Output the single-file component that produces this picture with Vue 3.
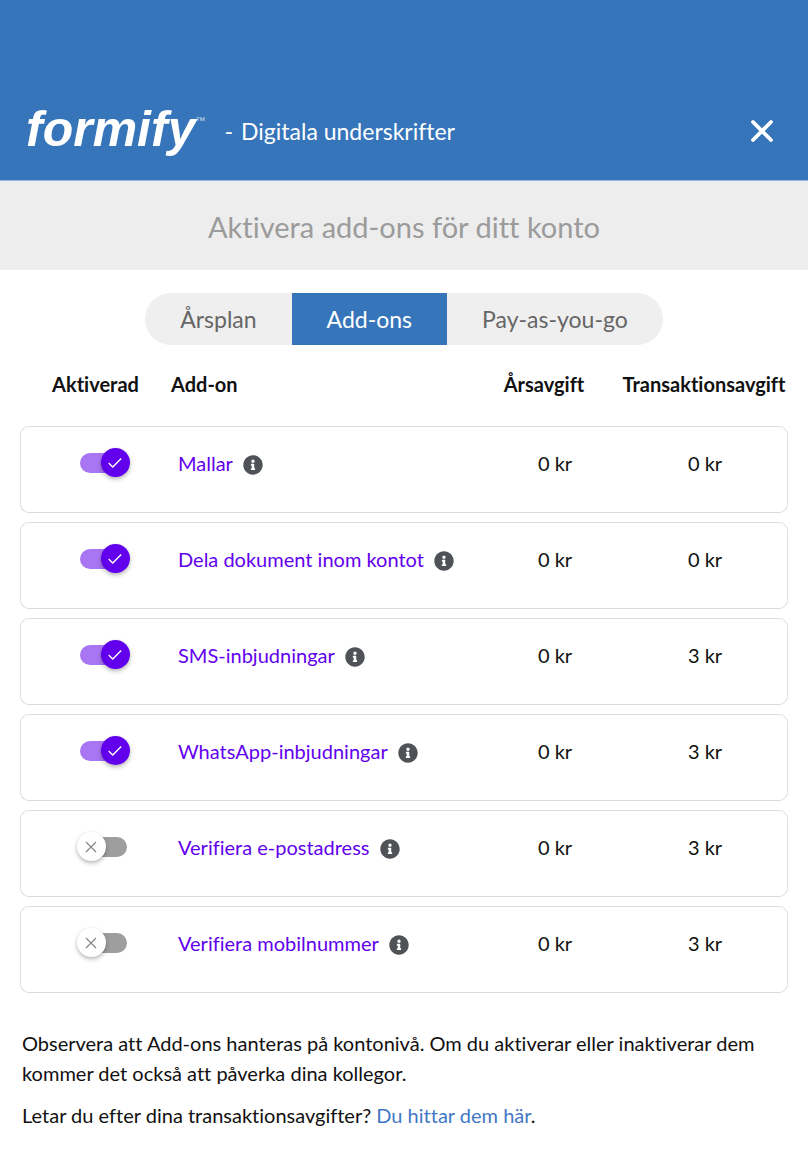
<script setup>
import { ref } from 'vue';

const tabs = ['Årsplan', 'Add-ons', 'Pay-as-you-go'];
const activeTab = ref('Add-ons');

const addons = ref([
  { id: 'mallar', name: 'Mallar', yearly: 0, transaction: 0, active: true },
  { id: 'dela', name: 'Dela dokument inom kontot', yearly: 0, transaction: 0, active: true },
  { id: 'sms', name: 'SMS-inbjudningar', yearly: 0, transaction: 3, active: true },
  { id: 'whatsapp', name: 'WhatsApp-inbjudningar', yearly: 0, transaction: 3, active: true },
  { id: 'epost', name: 'Verifiera e-postadress', yearly: 0, transaction: 3, active: false },
  { id: 'mobil', name: 'Verifiera mobilnummer', yearly: 0, transaction: 3, active: false },
]);
</script>

<template>
  <div class="page">
    <header class="topbar">
      <div class="logo">formify<span class="tm">™</span></div>
      <span class="dash">-</span>
      <span class="tagline">Digitala underskrifter</span>
      <button class="close-btn" type="button" aria-label="Stäng">
        <svg viewBox="0 0 24 24" width="24" height="24">
          <path d="M3 3 L21 21 M21 3 L3 21" />
        </svg>
      </button>
    </header>

    <h1 class="title">Aktivera add-ons för ditt konto</h1>

    <main class="content">
      <div class="tabs">
        <button
          v-for="tab in tabs"
          :key="tab"
          type="button"
          class="tab"
          :class="{ active: tab === activeTab }"
          @click="activeTab = tab"
        >{{ tab }}</button>
      </div>

      <table class="addons">
        <thead>
          <tr>
            <th class="col-active">Aktiverad</th>
            <th class="col-name">Add-on</th>
            <th class="col-year">Årsavgift</th>
            <th class="col-trans">Transaktionsavgift</th>
          </tr>
        </thead>
        <tbody>
          <tr v-for="addon in addons" :key="addon.id">
            <td class="col-active">
              <span class="switch">
                <input :id="addon.id" v-model="addon.active" type="checkbox" role="switch">
                <span class="track"></span>
                <span class="thumb">
                  <svg v-if="addon.active" viewBox="0 0 24 24" width="18" height="18">
                    <path d="M19.69 5.23 L8.96 15.96 L4.23 11.23 L2.96 12.5 L8.96 18.5 L20.96 6.5 Z" />
                  </svg>
                  <svg v-else class="cross" viewBox="0 0 12 12" width="12" height="12">
                    <path d="M1 1 L11 11 M11 1 L1 11" />
                  </svg>
                </span>
              </span>
            </td>
            <td class="col-name">
              <label :for="addon.id">{{ addon.name }}</label>
              <svg class="info" viewBox="0 0 512 512" width="20" height="20">
                <path d="M256 8C119 8 8 119 8 256s111 248 248 248 248-111 248-248S393 8 256 8zm0 110c23 0 42 19 42 42s-19 42-42 42-42-19-42-42 19-42 42-42zm56 254c0 7-5 12-12 12h-88c-7 0-12-5-12-12v-24c0-7 5-12 12-12h12v-64h-12c-7 0-12-5-12-12v-24c0-7 5-12 12-12h64c7 0 12 5 12 12v100h12c7 0 12 5 12 12z" />
              </svg>
            </td>
            <td class="col-year">{{ addon.yearly }} kr</td>
            <td class="col-trans">{{ addon.transaction }} kr</td>
          </tr>
        </tbody>
      </table>

      <div class="notes">
        <p>Observera att Add-ons hanteras på kontonivå. Om du aktiverar eller inaktiverar dem kommer det också att påverka dina kollegor.</p>
        <p>Letar du efter dina transaktionsavgifter? <a href="#">Du hittar dem här</a>.</p>
      </div>
    </main>
  </div>
</template>

<style>
body {
  margin: 0;
  background: #fff;
}
</style>

<style scoped>
.page {
  font-family: Lato, "Liberation Sans", sans-serif;
  font-size: 20px;
  font-variant-ligatures: none;
  color: #111;
}

/* header */
.topbar {
  display: flex;
  align-items: center;
  padding: 82px 34px 0 26px;
  height: 98px;
  background: #3675ba;
  color: #fff;
  border-bottom: 1px solid #9bb9dc;
}
.logo {
  display: flex;
  align-items: flex-start;
  padding-bottom: 4px;
  font-family: "Liberation Sans", Arial, sans-serif;
  font-size: 50px;
  font-weight: bold;
  font-style: italic;
  line-height: 56px;
}
.tm {
  font-size: 10px;
  font-weight: normal;
  font-style: normal;
  line-height: 40px;
  opacity: 0.7;
}
.dash {
  margin: 0 8px 0 19px;
  font-size: 23px;
}
.tagline {
  font-size: 23px;
}
.close-btn {
  margin-left: auto;
  padding: 0;
  border: none;
  background: none;
  line-height: 0;
  cursor: pointer;
}
.close-btn path {
  fill: none;
  stroke: #fff;
  stroke-width: 3.8;
  stroke-linecap: round;
}

.title {
  margin: 0;
  padding: 25px 20px 23px;
  background: #ededed;
  color: #9b9b9b;
  font-size: 29px;
  font-weight: normal;
  line-height: 41px;
  text-align: center;
}

.content {
  padding: 23px 20px;
}

/* tabs */
.tabs {
  display: flex;
  justify-content: center;
}
.tab {
  padding: 0 35px;
  border: none;
  background: #efefef;
  color: #666;
  font-family: inherit;
  font-size: 23px;
  line-height: 52px;
  cursor: pointer;
}
.tab:first-child {
  border-radius: 26px 0 0 26px;
}
.tab:last-child {
  border-radius: 0 26px 26px 0;
}
.tab.active {
  background: #3675ba;
  color: #fff;
}

/* add-on list, each row is drawn as a card */
.addons {
  width: 100%;
  border-collapse: separate;
  border-spacing: 0 9px;
  table-layout: fixed;
}
th {
  padding: 0 0 3px;
  font-weight: bold;
  line-height: 60px;
  white-space: nowrap;
}
th.col-active {
  width: 151px;
}
th.col-year {
  width: 130px;
  padding-right: 22px;
  box-sizing: border-box;
}
th.col-trans {
  width: 168px;
}
th.col-name {
  text-align: left;
}
td {
  height: 87px;
  padding: 21px 0 0;
  box-sizing: border-box;
  border: solid #dcdcdc;
  border-width: 1px 0;
  line-height: 30px;
  vertical-align: top;
  text-align: center;
}
td:first-child {
  border-left-width: 1px;
  border-radius: 9px 0 0 9px;
}
td:last-child {
  border-right-width: 1px;
  border-radius: 0 9px 9px 0;
}
td.col-name {
  padding-left: 7px;
  text-align: left;
}
td.col-trans {
  padding-left: 3px;
}
td label {
  color: #6200ee;
}
.info {
  margin-left: 10px;
  fill: #4f5256;
  vertical-align: -4px;
}

/* switch */
.switch {
  display: inline-block;
  position: relative;
  width: 47px;
  height: 20px;
  margin: 5px 0 0 14px;
}
.switch input {
  position: absolute;
  inset: 0;
  width: 100%;
  height: 100%;
  margin: 0;
  opacity: 0;
  z-index: 1;
  cursor: pointer;
}
.track {
  display: block;
  height: 20px;
  border-radius: 10px;
  background: #9e9e9e;
}
.thumb {
  display: flex;
  align-items: center;
  justify-content: center;
  position: absolute;
  top: -5px;
  left: -3px;
  width: 29px;
  height: 29px;
  border-radius: 50%;
  background: #fff;
  box-shadow: 0 2px 4px rgba(0, 0, 0, 0.3);
}
.thumb svg {
  fill: #fff;
}
.thumb .cross {
  fill: none;
  stroke: #888;
  stroke-width: 1.3;
}
input:checked + .track {
  background: #a876f3;
}
input:checked ~ .thumb {
  left: 21px;
  background: #6200ee;
}

/* notes */
.notes {
  padding: 26px 2px 0;
}
.notes p {
  margin: 0 0 12px;
  line-height: 30px;
}
.notes a {
  color: #3f78c4;
  text-decoration: none;
}
</style>
